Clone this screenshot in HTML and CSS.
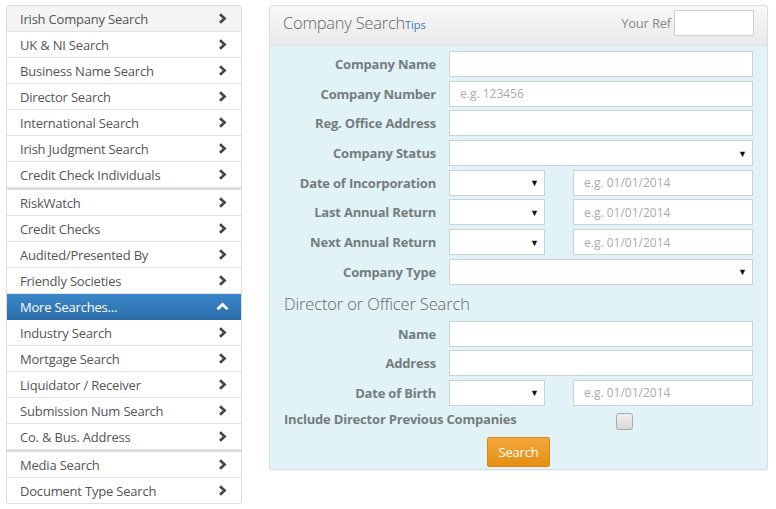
FILE: index.html
```html
<!doctype html>
<html lang="en">
<head>
	<meta charset="utf-8" />
	<title>Company Search</title>
	<link rel="stylesheet" href="styles.css">
</head>
<body>

	<div class="page">

		<!-- BEGIN: Search menu. -->
		<nav class="menu">
			<ul class="menu__group">
				<li class="menu__item menu__item--current">Irish Company Search <svg class="chev" viewBox="0 0 9 11"><path d="M2 1.2 L6.6 5.5 L2 9.8" /></svg></li>
				<li class="menu__item">UK &amp; NI Search <svg class="chev" viewBox="0 0 9 11"><path d="M2 1.2 L6.6 5.5 L2 9.8" /></svg></li>
				<li class="menu__item">Business Name Search <svg class="chev" viewBox="0 0 9 11"><path d="M2 1.2 L6.6 5.5 L2 9.8" /></svg></li>
				<li class="menu__item">Director Search <svg class="chev" viewBox="0 0 9 11"><path d="M2 1.2 L6.6 5.5 L2 9.8" /></svg></li>
				<li class="menu__item">International Search <svg class="chev" viewBox="0 0 9 11"><path d="M2 1.2 L6.6 5.5 L2 9.8" /></svg></li>
				<li class="menu__item">Irish Judgment Search <svg class="chev" viewBox="0 0 9 11"><path d="M2 1.2 L6.6 5.5 L2 9.8" /></svg></li>
				<li class="menu__item">Credit Check Individuals <svg class="chev" viewBox="0 0 9 11"><path d="M2 1.2 L6.6 5.5 L2 9.8" /></svg></li>
			</ul>
			<ul class="menu__group">
				<li class="menu__item">RiskWatch <svg class="chev" viewBox="0 0 9 11"><path d="M2 1.2 L6.6 5.5 L2 9.8" /></svg></li>
				<li class="menu__item">Credit Checks <svg class="chev" viewBox="0 0 9 11"><path d="M2 1.2 L6.6 5.5 L2 9.8" /></svg></li>
				<li class="menu__item">Audited/Presented By <svg class="chev" viewBox="0 0 9 11"><path d="M2 1.2 L6.6 5.5 L2 9.8" /></svg></li>
				<li class="menu__item">Friendly Societies <svg class="chev" viewBox="0 0 9 11"><path d="M2 1.2 L6.6 5.5 L2 9.8" /></svg></li>
				<li class="menu__item menu__item--open">More Searches... <svg class="chev chev--up" viewBox="0 0 13 9"><path d="M1.4 7.2 L6.5 2.4 L11.6 7.2" /></svg></li>
				<li class="menu__item">Industry Search <svg class="chev" viewBox="0 0 9 11"><path d="M2 1.2 L6.6 5.5 L2 9.8" /></svg></li>
				<li class="menu__item">Mortgage Search <svg class="chev" viewBox="0 0 9 11"><path d="M2 1.2 L6.6 5.5 L2 9.8" /></svg></li>
				<li class="menu__item">Liquidator / Receiver <svg class="chev" viewBox="0 0 9 11"><path d="M2 1.2 L6.6 5.5 L2 9.8" /></svg></li>
				<li class="menu__item">Submission Num Search <svg class="chev" viewBox="0 0 9 11"><path d="M2 1.2 L6.6 5.5 L2 9.8" /></svg></li>
				<li class="menu__item">Co. &amp; Bus. Address <svg class="chev" viewBox="0 0 9 11"><path d="M2 1.2 L6.6 5.5 L2 9.8" /></svg></li>
			</ul>
			<ul class="menu__group">
				<li class="menu__item">Media Search <svg class="chev" viewBox="0 0 9 11"><path d="M2 1.2 L6.6 5.5 L2 9.8" /></svg></li>
				<li class="menu__item">Document Type Search <svg class="chev" viewBox="0 0 9 11"><path d="M2 1.2 L6.6 5.5 L2 9.8" /></svg></li>
			</ul>
		</nav>
		<!-- END: Search menu. -->

		<!-- BEGIN: Search panel. -->
		<section class="panel">
			<header class="panel__head">
				<h2 class="panel__title">Company Search<a class="panel__tips">Tips</a></h2>
				<label class="panel__ref">Your Ref <span class="field field--ref"></span></label>
			</header>

			<div class="panel__body">

				<div class="row">
					<span class="row__label">Company Name</span>
					<span class="field"></span>
				</div>
				<div class="row">
					<span class="row__label">Company Number</span>
					<span class="field field--hint">e.g. 123456</span>
				</div>
				<div class="row">
					<span class="row__label">Reg. Office Address</span>
					<span class="field"></span>
				</div>
				<div class="row">
					<span class="row__label">Company Status</span>
					<span class="field field--select"><i class="arrow">&#9660;</i></span>
				</div>
				<div class="row">
					<span class="row__label">Date of Incorporation</span>
					<span class="field field--select field--short"><i class="arrow">&#9660;</i></span>
					<span class="field field--hint field--date">e.g. 01/01/2014</span>
				</div>
				<div class="row">
					<span class="row__label">Last Annual Return</span>
					<span class="field field--select field--short"><i class="arrow">&#9660;</i></span>
					<span class="field field--hint field--date">e.g. 01/01/2014</span>
				</div>
				<div class="row">
					<span class="row__label">Next Annual Return</span>
					<span class="field field--select field--short"><i class="arrow">&#9660;</i></span>
					<span class="field field--hint field--date">e.g. 01/01/2014</span>
				</div>
				<div class="row">
					<span class="row__label">Company Type</span>
					<span class="field field--select"><i class="arrow">&#9660;</i></span>
				</div>

				<h3 class="panel__subtitle">Director or Officer Search</h3>

				<div class="row">
					<span class="row__label">Name</span>
					<span class="field"></span>
				</div>
				<div class="row">
					<span class="row__label">Address</span>
					<span class="field"></span>
				</div>
				<div class="row">
					<span class="row__label">Date of Birth</span>
					<span class="field field--select field--short"><i class="arrow">&#9660;</i></span>
					<span class="field field--hint field--date">e.g. 01/01/2014</span>
				</div>

				<div class="check-row">
					<span class="check-row__label">Include Director Previous Companies</span>
					<span class="checkbox"></span>
				</div>

				<div class="actions">
					<button class="button" type="button">Search</button>
				</div>

			</div>
		</section>
		<!-- END: Search panel. -->

	</div>

</body>
</html>
```

FILE: styles.css
```css
html {
	box-sizing: border-box ;
}

*, *:before, *:after {
	box-sizing: inherit ;
}

body {
	color: #555555 ;
	font-family: "Open Sans", "Liberation Sans", sans-serif ;
	font-size: 13px ;
	letter-spacing: -0.2px ;
	margin: 0px 0px 0px 0px ;
}

.page {
	align-items: flex-start ;
	display: flex ;
	gap: 27px ;
	padding: 5px 0px 0px 6px ;
}

/* BEGIN: Menu. */
.menu {
	background-color: #ffffff ;
	border: 1px solid #dddddd ;
	border-radius: 3px ;
	box-shadow: 0px 1px 1px rgba( 0, 0, 0, 0.06 ) ;
	flex: 0 0 236px ;
	overflow: hidden ;
}

.menu__group {
	list-style: none ;
	margin: 0px 0px 0px 0px ;
	padding: 0px 0px 0px 0px ;
}

.menu__group + .menu__group {
	border-top: 2px solid #dcdcdc ;
}

.menu__item {
	align-items: center ;
	border-bottom: 1px solid #e2e2e2 ;
	display: flex ;
	height: 26px ;
	justify-content: space-between ;
	padding: 0px 14px 0px 13px ;
}

.menu__group:last-child .menu__item:last-child {
	border-bottom: none ;
	height: 25px ;
}

.menu__item--current {
	background-color: #f4f4f4 ;
}

.menu__item--open {
	background: linear-gradient( #3b87c9, #2c6eaa ) ;
	border-bottom-color: #2c6aa4 ;
	color: #ffffff ;
}

.chev {
	fill: none ;
	height: 11px ;
	stroke: #474747 ;
	stroke-width: 2.7 ;
	width: 9px ;
}

.chev--up {
	height: 9px ;
	margin-right: -2px ;
	stroke: #ffffff ;
	width: 13px ;
}
/* END: Menu. */

/* BEGIN: Panel. */
.panel {
	border: 1px solid #d7dfe1 ;
	border-radius: 2px ;
	box-shadow: 0px 1px 1px rgba( 0, 0, 0, 0.05 ) ;
	flex: 0 0 499px ;
}

.panel__head {
	align-items: flex-start ;
	background: linear-gradient( #f8f8f8, #e9e9e9 ) ;
	border-bottom: 1px solid #dddddd ;
	display: flex ;
	height: 40px ;
	justify-content: space-between ;
	padding: 4px 13px 0px 13px ;
}

.panel__title {
	color: #666666 ;
	font-size: 16.5px ;
	font-weight: 300 ;
	letter-spacing: -0.25px ;
	line-height: 26px ;
	margin: 0px 0px 0px 0px ;
}

.panel__tips {
	color: #3a78b5 ;
	font-size: 11px ;
	font-weight: 400 ;
	letter-spacing: 0px ;
}

.panel__ref {
	align-items: center ;
	color: #888888 ;
	display: flex ;
	font-size: 13px ;
	gap: 3px ;
}

.field {
	align-items: center ;
	background-color: #ffffff ;
	border: 1px solid #c9d3d5 ;
	display: flex ;
	flex: 0 0 304px ;
	height: 26px ;
	letter-spacing: 0px ;
	padding: 0px 10px 0px 10px ;
}

.field--ref {
	flex: 0 0 80px ;
}

.field--hint {
	color: #aaaaaa ;
	font-size: 12px ;
}

.field--select {
	justify-content: flex-end ;
	padding-right: 5px ;
}

.field--short {
	flex-basis: 96px ;
}

.field--date {
	flex-basis: 180px ;
	margin-left: 28px ;
}

.arrow {
	color: #111111 ;
	font-size: 9px ;
	font-style: normal ;
}

.panel__body {
	background-color: #e2f3f7 ;
	padding: 5px 13px 2px 13px ;
}

.row {
	align-items: center ;
	display: flex ;
	margin-bottom: 3.7px ;
}

.row__label {
	color: #747d7e ;
	flex: 0 0 166px ;
	font-weight: 700 ;
	padding-right: 13px ;
	text-align: right ;
}

.panel__subtitle {
	color: #666666 ;
	font-size: 16.5px ;
	font-weight: 300 ;
	letter-spacing: -0.15px ;
	margin: 0px 0px 0px 0px ;
	padding: 3px 0px 6px 1px ;
}

.check-row {
	align-items: flex-start ;
	display: flex ;
	padding-left: 1px ;
}

.check-row__label {
	color: #747d7e ;
	font-weight: 700 ;
}

.checkbox {
	background: linear-gradient( #f0f0f0, #d8d8d8 ) ;
	border: 1px solid #a9a9a9 ;
	border-radius: 3px ;
	flex: 0 0 17px ;
	height: 17px ;
	margin: 3.5px 0px 0px 99px ;
}

.actions {
	display: flex ;
	justify-content: center ;
	padding-top: 7px ;
}

.button {
	background: linear-gradient( #f4a73c, #e58f12 ) ;
	border: 1px solid #d98714 ;
	border-radius: 2px ;
	color: #ffffff ;
	font-family: inherit ;
	font-size: 13px ;
	height: 30px ;
	letter-spacing: -0.2px ;
	padding: 0px 11px 0px 11px ;
}
/* END: Panel. */
```
